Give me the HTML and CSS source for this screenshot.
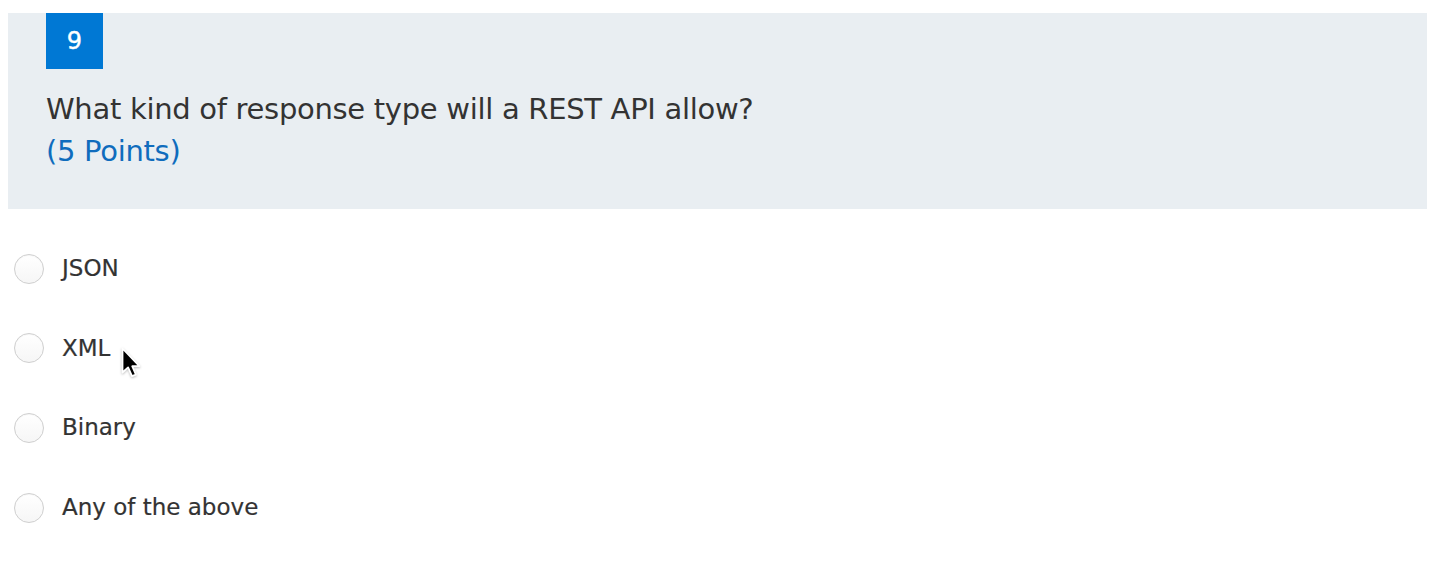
FILE: index.html
```html
<!DOCTYPE html>
<html lang="en">
<head>
<meta charset="utf-8">
<title>Question 9</title>
<link rel="stylesheet" href="styles.css">
</head>
<body>
<div class="page">
  <section class="question">
    <header class="q-head">
      <div class="q-badge">9</div>
      <div class="q-title">
        <div class="q-text">What kind of response type will a REST API allow?</div>
        <div class="q-points">(5 Points)</div>
      </div>
    </header>
    <div class="q-options">
      <label class="option"><span class="radio"></span><span class="opt-text">JSON</span></label>
      <label class="option"><span class="radio"></span><span class="opt-text">XML</span></label>
      <label class="option"><span class="radio"></span><span class="opt-text">Binary</span></label>
      <label class="option"><span class="radio"></span><span class="opt-text">Any of the above</span></label>
    </div>
  </section>
  <svg class="cursor" width="22" height="32" viewBox="0 0 22 32" aria-hidden="true">
    <path d="M1.5 1.5 L1.5 25.5 L7.1 20.4 L11 29.2 L14.9 27.6 L11.2 19.2 L18.4 19.2 Z" fill="#000" stroke="#fff" stroke-width="1.8" stroke-linejoin="round"/>
  </svg>
</div>
</body>
</html>
```

FILE: styles.css
```css
html, body {
  margin: 0;
  padding: 0;
  background: #ffffff;
}

body {
  font-family: "DejaVu Sans", Verdana, sans-serif;
  color: #333333;
}

.page {
  position: relative;
  padding: 13px 21px 0 8px;
}

.q-head {
  background: #e9eef2;
  padding: 0 38px 37px 38px;
}

.q-badge {
  width: 57px;
  height: 56px;
  background: #0078d4;
  color: #ffffff;
  font-size: 24px;
  display: flex;
  align-items: center;
  justify-content: center;
  -webkit-text-stroke: 0.4px #ffffff;
}

.q-title {
  margin-top: 19px;
  font-size: 29px;
  line-height: 42px;
  letter-spacing: -0.3px;
}

.q-text {
  color: #333333;
}

.q-points {
  color: #0f6cbd;
}

.q-options {
  margin-top: 20px;
  display: flex;
  flex-direction: column;
}

.option {
  height: 79.6px;
  display: flex;
  align-items: center;
  padding-left: 6px;
}

.radio {
  width: 28px;
  height: 28px;
  border-radius: 50%;
  border: 1px solid #cfcfcf;
  background: linear-gradient(#ffffff, #f6f6f6);
  box-shadow: inset 0 1px 1px rgba(0,0,0,0.04);
  flex: none;
}

.opt-text {
  margin-left: 18px;
  font-size: 23px;
  line-height: 23px;
  color: #333333;
  -webkit-text-stroke: 0.2px #333333;
}

.cursor {
  position: absolute;
  left: 121px;
  top: 347px;
  filter: drop-shadow(0 1px 1px rgba(0,0,0,0.25));
}
```
